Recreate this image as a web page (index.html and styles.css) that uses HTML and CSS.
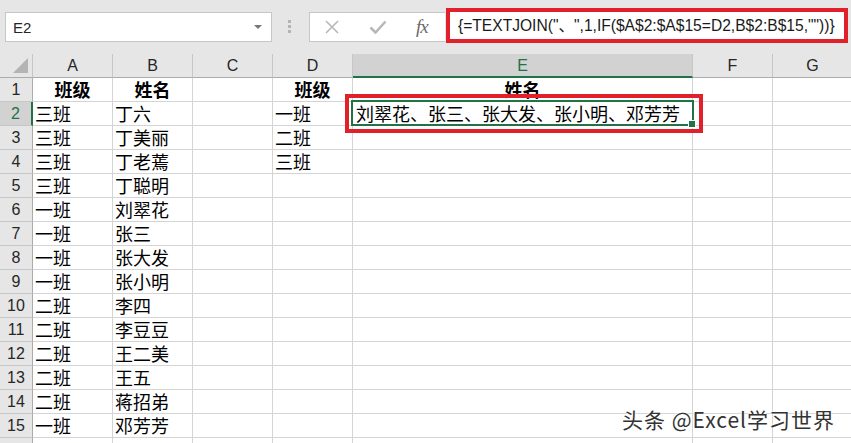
FILE: index.html
```html
<!DOCTYPE html>
<html lang="zh">
<head>
<meta charset="utf-8">
<title>Excel TEXTJOIN</title>
<link rel="stylesheet" href="styles.css">
</head>
<body>
<div class="topbar">
  <div class="namebox"><span class="nb-text">E2</span><span class="nb-arrow"></span></div>
  <div class="dots"><i></i><i></i><i></i></div>
  <div class="fnbtns">
    <svg class="ic-x" width="14" height="14" viewBox="0 0 14 14"><path d="M1 1 L13 13 M13 1 L1 13" stroke="#b8b8b8" stroke-width="1.6" fill="none"/></svg>
    <svg class="ic-ok" width="18" height="14" viewBox="0 0 18 14"><path d="M1.5 7.5 L6.5 12.5 L16.5 1.5" stroke="#b8b8b8" stroke-width="2.6" fill="none"/></svg>
    <span class="fx">fx</span>
  </div>
  <div class="formula">{=TEXTJOIN("、",1,IF($A$2:$A$15=D2,B$2:B$15,""))}</div>
</div>

<div class="sheet">
  <div class="grid">
    <div class="ch corner"><span class="tri"></span></div>
    <div class="ch">A</div><div class="ch">B</div><div class="ch">C</div><div class="ch">D</div><div class="ch sel">E</div><div class="ch">F</div><div class="ch">G</div>

    <div class="rh">1</div><div class="c b ctr">班级</div><div class="c b ctr">姓名</div><div class="c"></div><div class="c b ctr">班级</div><div class="c b ctr">姓名</div><div class="c"></div><div class="c"></div>
    <div class="rh sel">2</div><div class="c">三班</div><div class="c">丁六</div><div class="c"></div><div class="c">一班</div><div class="c active">刘翠花、张三、张大发、张小明、邓芳芳<span class="selbox"><span class="handle"></span></span></div><div class="c"></div><div class="c"></div>
    <div class="rh">3</div><div class="c">三班</div><div class="c">丁美丽</div><div class="c"></div><div class="c">二班</div><div class="c"></div><div class="c"></div><div class="c"></div>
    <div class="rh">4</div><div class="c">三班</div><div class="c">丁老蔫</div><div class="c"></div><div class="c">三班</div><div class="c"></div><div class="c"></div><div class="c"></div>
    <div class="rh">5</div><div class="c">三班</div><div class="c">丁聪明</div><div class="c"></div><div class="c"></div><div class="c"></div><div class="c"></div><div class="c"></div>
    <div class="rh">6</div><div class="c">一班</div><div class="c">刘翠花</div><div class="c"></div><div class="c"></div><div class="c"></div><div class="c"></div><div class="c"></div>
    <div class="rh">7</div><div class="c">一班</div><div class="c">张三</div><div class="c"></div><div class="c"></div><div class="c"></div><div class="c"></div><div class="c"></div>
    <div class="rh">8</div><div class="c">一班</div><div class="c">张大发</div><div class="c"></div><div class="c"></div><div class="c"></div><div class="c"></div><div class="c"></div>
    <div class="rh">9</div><div class="c">一班</div><div class="c">张小明</div><div class="c"></div><div class="c"></div><div class="c"></div><div class="c"></div><div class="c"></div>
    <div class="rh">10</div><div class="c">二班</div><div class="c">李四</div><div class="c"></div><div class="c"></div><div class="c"></div><div class="c"></div><div class="c"></div>
    <div class="rh">11</div><div class="c">二班</div><div class="c">李豆豆</div><div class="c"></div><div class="c"></div><div class="c"></div><div class="c"></div><div class="c"></div>
    <div class="rh">12</div><div class="c">二班</div><div class="c">王二美</div><div class="c"></div><div class="c"></div><div class="c"></div><div class="c"></div><div class="c"></div>
    <div class="rh">13</div><div class="c">二班</div><div class="c">王五</div><div class="c"></div><div class="c"></div><div class="c"></div><div class="c"></div><div class="c"></div>
    <div class="rh">14</div><div class="c">二班</div><div class="c">蒋招弟</div><div class="c"></div><div class="c"></div><div class="c"></div><div class="c"></div><div class="c"></div>
    <div class="rh">15</div><div class="c">一班</div><div class="c">邓芳芳</div><div class="c"></div><div class="c"></div><div class="c"></div><div class="c"></div><div class="c"></div>
    <div class="rh"></div><div class="c"></div><div class="c"></div><div class="c"></div><div class="c"></div><div class="c"></div><div class="c"></div><div class="c"></div>
  </div>
  <div class="mark-e2"></div>
  <div class="watermark">头条 @Excel学习世界</div>
</div>
</body>
</html>
```

FILE: styles.css
```css
html, body {
  margin: 0;
  padding: 0;
}
body {
  width: 851px;
  height: 443px;
  overflow: hidden;
  background: #ffffff;
  font-family: "Liberation Sans", "Noto Sans CJK SC", sans-serif;
}

/* ---------- top formula bar ---------- */
.topbar {
  height: 54px;
  box-sizing: border-box;
  background: #e6e6e6;
  display: flex;
  align-items: flex-start;
  padding: 12px 0 0 5px;
}
.namebox {
  width: 267px;
  height: 30px;
  box-sizing: border-box;
  background: #ffffff;
  border: 1px solid #c6c6c6;
  display: flex;
  align-items: center;
  justify-content: space-between;
  padding: 0 9px 0 7px;
}
.nb-text {
  font-size: 15px;
  color: #262626;
}
.nb-arrow {
  width: 0;
  height: 0;
  border-left: 4px solid transparent;
  border-right: 4px solid transparent;
  border-top: 4px solid #777777;
}
.dots {
  margin: 8px 0 0 16px;
  width: 4px;
  display: flex;
  flex-direction: column;
  gap: 2px;
}
.dots i {
  display: block;
  width: 3px;
  height: 3px;
  background: #b4b4b4;
}
.fnbtns {
  margin-left: 17px;
  width: 136px;
  height: 30px;
  box-sizing: border-box;
  background: #ffffff;
  border: 1px solid #c6c6c6;
  border-right: none;
  display: flex;
  align-items: center;
  padding-left: 15px;
}
.ic-x { margin-right: 30px; }
.ic-ok { margin-right: 29px; }
.fx {
  font-family: "Liberation Serif", "DejaVu Serif", serif;
  font-style: italic;
  font-size: 19px;
  color: #6a6a6a;
  letter-spacing: -1px;
}
.formula {
  margin: -4px 0 0 1px;
  width: 402px;
  height: 35px;
  box-sizing: border-box;
  border: 4px solid #e0202a;
  background: #ffffff;
  font-size: 15.6px;
  line-height: 27px;
  color: #1a1a1a;
  padding-left: 8px;
  white-space: nowrap;
  overflow: hidden;
}

/* ---------- grid ---------- */
.sheet {
  position: relative;
}
.grid {
  display: grid;
  grid-template-columns: 33px 80px 80px 80px 80px 340px 80px 80px;
  grid-auto-rows: 24px;
}
.grid > div {
  box-sizing: border-box;
  border-right: 1px solid #d4d4d4;
  border-bottom: 1px solid #d4d4d4;
  white-space: nowrap;
}
.ch {
  background: #e6e6e6;
  border-right-color: #c6c6c6 !important;
  border-bottom-color: #ababab !important;
  font-size: 16px;
  line-height: 23px;
  text-align: center;
  color: #262626;
}
.ch.sel {
  background: #d2d2d2;
  color: #217346;
  border-bottom: 2px solid #217346 !important;
}
.corner {
  position: relative;
}
.tri {
  position: absolute;
  right: 4px;
  bottom: 4px;
  width: 15px;
  height: 15px;
  background: #b4b4b4;
  clip-path: polygon(100% 0, 100% 100%, 0 100%);
}
.rh {
  background: #e6e6e6;
  border-right-color: #ababab !important;
  border-bottom-color: #c6c6c6 !important;
  font-size: 16px;
  line-height: 23px;
  text-align: center;
  color: #262626;
}
.rh.sel {
  background: #d2d2d2;
  color: #217346;
  border-right: 2px solid #217346 !important;
}
.c {
  font-family: "Noto Sans CJK SC", sans-serif;
  font-size: 18px;
  line-height: 23px;
  color: #000000;
  padding-left: 2px;
}
.c.b { font-weight: bold; }
.c.ctr { text-align: center; padding-left: 0; }
.c.active {
  position: relative;
  padding-left: 3px;
}
.selbox {
  position: absolute;
  left: -2px;
  top: -2px;
  right: -2px;
  bottom: -1px;
  border: 2px solid #217346;
}
.handle {
  position: absolute;
  right: -4px;
  bottom: -4px;
  width: 6px;
  height: 6px;
  background: #217346;
  border: 1px solid #ffffff;
}

/* annotation box around E2 */
.mark-e2 {
  position: absolute;
  left: 345px;
  top: 40px;
  width: 358px;
  height: 39px;
  box-sizing: border-box;
  border: 4px solid #e0202a;
}

.watermark {
  position: absolute;
  left: 622px;
  top: 353px;
  font-family: "Noto Sans CJK SC", sans-serif;
  font-size: 21px;
  letter-spacing: 1px;
  line-height: 24px;
  color: #333333;
  text-shadow: 0 0 2px #ffffff, 0 0 2px #ffffff, 0 0 3px #ffffff;
}
```
